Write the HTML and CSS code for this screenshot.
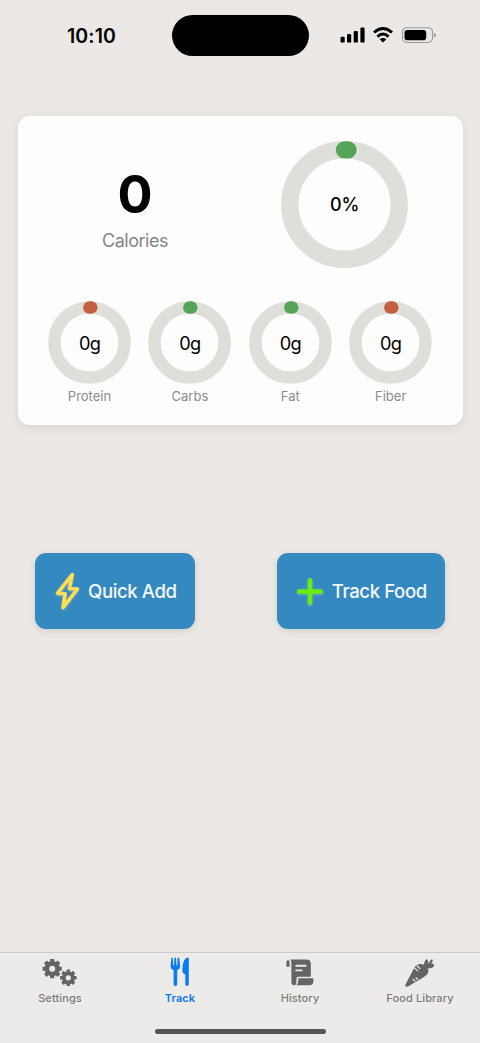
FILE: index.html
```html
<!DOCTYPE html>
<html lang="en">
<head>
<meta charset="utf-8">
<title>Track</title>
<link rel="stylesheet" href="styles.css">
</head>
<body>
<div class="screen">
  <header class="status">
    <span class="time">10:10</span>
    <span class="island"></span>
    <svg class="signals" width="98" height="20" viewBox="339 25 98 20">
      <rect x="340.5" y="36.7" width="4.2" height="5.9" rx="1.2"/>
      <rect x="347" y="34" width="4.2" height="8.6" rx="1.2"/>
      <rect x="353.7" y="31" width="4.2" height="11.6" rx="1.2"/>
      <rect x="360.4" y="27.5" width="4.2" height="15.1" rx="1.2"/>
      <path class="arc" d="M374 32.5Q383 24.4 392 32.5M377.4 36.6Q383 31.5 388.6 36.6"/>
      <path d="M379.6 39.3Q383 36.6 386.4 39.3L383 42.6Z"/>
      <rect class="shell" x="402.5" y="27.7" width="30" height="14.8" rx="4.4"/>
      <rect x="404.5" y="30" width="21.7" height="10.2" rx="2.8"/>
      <path class="tip" d="M434 32.8Q436 33.4 436 35.1T434 37.4Z"/>
    </svg>
  </header>

  <main class="content">
    <section class="card">
      <div class="summary">
        <div class="calories">
          <strong>0</strong>
          <span>Calories</span>
        </div>
        <div class="ring ring-large">
          <svg viewBox="0 0 127 127">
            <circle class="track" cx="63.5" cy="63.5" r="54.7"/>
            <path class="halo" d="M64 8.9H68.2"/>
            <path class="green" d="M63.5 8.9H67.1"/>
          </svg>
          <span>0%</span>
        </div>
      </div>
      <div class="macros">
        <div class="macro">
          <div class="ring"><svg viewBox="0 0 83 83"><circle class="track" cx="41.5" cy="41.5" r="35.1"/><path class="halo" d="M41.5 6.6H44"/><path class="red" d="M41.3 6.6H43.4"/></svg><span>0g</span></div>
          <p>Protein</p>
        </div>
        <div class="macro">
          <div class="ring"><svg viewBox="0 0 83 83"><circle class="track" cx="41.5" cy="41.5" r="35.1"/><path class="halo" d="M41.5 6.6H44"/><path class="green" d="M41.3 6.6H43.4"/></svg><span>0g</span></div>
          <p>Carbs</p>
        </div>
        <div class="macro">
          <div class="ring"><svg viewBox="0 0 83 83"><circle class="track" cx="41.5" cy="41.5" r="35.1"/><path class="halo" d="M41.5 6.6H44"/><path class="green" d="M41.3 6.6H43.4"/></svg><span>0g</span></div>
          <p>Fat</p>
        </div>
        <div class="macro">
          <div class="ring"><svg viewBox="0 0 83 83"><circle class="track" cx="41.5" cy="41.5" r="35.1"/><path class="halo" d="M41.5 6.6H44"/><path class="red" d="M41.3 6.6H43.4"/></svg><span>0g</span></div>
          <p>Fiber</p>
        </div>
      </div>
    </section>

    <div class="actions">
      <button class="action quick">
        <svg class="bolt" width="26" height="38" viewBox="0 0 26 38"><path d="M17.2 2.5L2.6 21.2L10.1 21.7L8.1 35.5L22.4 17L14.4 16.5Z"/></svg>
        <span>Quick Add</span>
      </button>
      <button class="action food">
        <svg class="plus" width="26" height="27" viewBox="0 0 26 27"><path d="M13 2.2V24.8M2 13.5H24"/></svg>
        <span>Track Food</span>
      </button>
    </div>
  </main>

  <nav class="tabs">
    <a class="tab">
      <svg width="36" height="30" viewBox="0 0 36 30">
        <g class="gear" transform="translate(10.2 11.7)">
          <circle r="5.3"/>
          <path d="M0-6V-9.6M0 6V9.6M-6 0H-9.6M6 0H9.6M-4.2-4.2L-6.8-6.8M4.2-4.2L6.8-6.8M-4.2 4.2L-6.8 6.8M4.2 4.2L6.8 6.8"/>
        </g>
        <g class="gear" transform="translate(26.3 20.8) scale(.86)">
          <circle r="5.3"/>
          <path d="M0-6V-9.6M0 6V9.6M-6 0H-9.6M6 0H9.6M-4.2-4.2L-6.8-6.8M4.2-4.2L6.8-6.8M-4.2 4.2L-6.8 6.8M4.2 4.2L6.8 6.8"/>
        </g>
      </svg>
      <span>Settings</span>
    </a>
    <a class="tab active">
      <svg width="36" height="30" viewBox="-.4 .2 36 30">
        <path d="M9.1 1.2Q9.9.4 10.5 1.2L10.8 8.6H11.6L12.1 1.1Q12.9.3 13.7 1.1L14.1 8.6H14.9L15.3 1.2Q16.2.4 16.8 1.2L17.7 9Q17.8 12.4 14.8 13.3V27.7Q14.6 29.2 13 29.2T11.2 27.7V13.3Q8.1 12.4 8.2 9Z"/>
        <path d="M25.2.8Q26.3.7 26.4 2V27.8Q26.2 29.2 24.6 29.2T22.9 27.8V17.8L20.6 16.3Q19.6 14.6 20.2 10Q21 1.8 25.2.8Z"/>
      </svg>
      <span>Track</span>
    </a>
    <a class="tab">
      <svg width="36" height="30" viewBox="0 .2 36 30">
        <path d="M4.4 10V6Q4.4 3.2 6 3.2T7.6 6V10Z"/>
        <path d="M8 2.7H24.5Q28.8 2.8 28.8 7V19.9H16.4Q14.4 19.9 14.4 22V25.4Q14.3 28.5 11.9 28.5T9.4 25.5V6Q9.4 4 8 2.7Z"/>
        <path d="M16.2 21.5H31.4V24.2Q31.4 28.5 27.3 28.5H14.2Q16 27.2 16.2 24.8Z"/>
        <path class="cut" d="M14.2 9H23.7M14.2 13.6H19.8"/>
      </svg>
      <span>History</span>
    </a>
    <a class="tab">
      <svg width="36" height="30" viewBox="0 .2 36 30">
        <path d="M3.8 29.6Q2.9 29 3.6 27.4L12.2 11.1Q14.5 7.3 18.5 7.2Q22.7 7.3 24.8 10.2Q28.2 14.4 24.7 18Q23 19.5 21.2 20.7L6.4 29.5Q5 30.2 3.8 29.6Z"/>
        <path d="M22.3 10.2Q21.2 5.4 24.6 2.2Q27.4 4.6 26.5 7.1Q28 3.4 30 2.3Q31.8 4.2 29 7.1Q31.7 6.3 32.2 8.3Q31.6 12.5 24 11.4Z"/>
        <path class="slash" d="M12.6 11.3L15.7 14.1M15 9L17.8 11.7M11 22.5L13 24.3M13.9 21L15.6 22.5"/>
      </svg>
      <span>Food Library</span>
    </a>
  </nav>
  <footer class="home"><span></span></footer>
</div>
</body>
</html>
```
FILE: styles.css
```css
* { box-sizing: border-box; }
body {
  margin: 0;
  background: #ebe8e5;
  font-family: Inter, Roboto, sans-serif;
  color: #000;
}
.screen {
  width: 480px;
  height: 1043px;
  display: flex;
  flex-direction: column;
  overflow: hidden;
}
.status {
  height: 70px;
  flex: none;
  display: grid;
  grid-template-columns: 171.5px 137px 171.5px;
}
.time {
  padding: 24px 0 0 67px;
  font-size: 19.5px;
  line-height: 25px;
  font-weight: 600;
  letter-spacing: 0.1px;
}
.island {
  margin-top: 15px;
  height: 40.5px;
  border-radius: 21px;
  background: #000;
}
.signals { margin: 25px 0 0 30.5px; }
.arc { fill: none; stroke: #000; stroke-width: 2.9; }
.shell { fill: none; stroke: #999; stroke-width: 1.1; }
.tip { fill: #999; }
.content { flex: 1; padding: 45.6px 17.5px 0; }
.card {
  height: 309.8px;
  padding-top: 25.5px;
  background: #fdfdfd;
  border-radius: 12px;
  box-shadow: 0 3px 10px rgba(60, 65, 50, 0.11);
}
.summary {
  display: grid;
  grid-template-columns: 235px 1fr;
}
.calories {
  display: flex;
  flex-direction: column;
  align-items: center;
  padding-top: 21px;
}
.calories strong {
  font-size: 52px;
  line-height: 66px;
  font-weight: 700;
}
.calories span {
  margin-top: 1px;
  font-size: 18px;
  line-height: 24px;
  color: #858585;
  letter-spacing: -0.5px;
}
.ring {
  display: grid;
  width: 83px;
  height: 83px;
  place-items: center;
}
.ring > * { grid-area: 1 / 1; }
.ring svg { width: 100%; height: 100%; }
.ring span { font-size: 18.2px; letter-spacing: -0.7px; line-height: 24px; padding-top: 1px; }
.ring circle, .ring path { fill: none; stroke-width: 12.5; }
.ring path { stroke-linecap: round; }
.ring .track { stroke: #dedfd9; }
.ring .halo { stroke: #f1f4ef; }
.ring .green { stroke: #55a457; }
.ring .red { stroke: #c55f42; }
.ring-large {
  width: 127px;
  height: 127px;
  margin-left: 28.7px;
}
.ring-large circle, .ring-large path { stroke-width: 17.4; }
.ring-large span { font-size: 18px; font-weight: 550; letter-spacing: 0; padding-top: 1px; }
.macros {
  display: grid;
  grid-template-columns: repeat(4, 83px);
  column-gap: 17.4px;
  margin: 32.7px 0 0 30.5px;
}
.macro p {
  margin: 3px 0 0;
  text-align: center;
  font-size: 13px;
  line-height: 18px;
  color: #8b8b8b;
  letter-spacing: 0;
}
.actions {
  display: flex;
  justify-content: space-between;
  margin: 127.5px 0 0;
  padding: 0 17.5px;
}
.action {
  height: 76.3px;
  display: flex;
  align-items: center;
  border: 0;
  border-radius: 11px;
  background: #3589c1;
  color: #f5f8fa;
  font: 500 18.6px/24px Inter, Roboto, sans-serif;
  white-space: nowrap;
  padding: 0;
  box-shadow: 0 2px 7px rgba(50, 60, 60, 0.14);
}
.quick { width: 160px; padding-left: 20px; }
.food { width: 168.5px; padding-left: 20.5px; }
.quick span { margin-left: 7px; letter-spacing: -0.4px; }
.food span { margin-left: 8.8px; letter-spacing: -0.4px; }
.action path {
  fill: none;
  stroke-linecap: round;
  stroke-linejoin: round;
}
.bolt { filter: drop-shadow(0 1px 1px rgba(180, 190, 180, 0.6)); }
.bolt path { stroke: #ffdf51; stroke-width: 3.6; }
.plus { filter: drop-shadow(0 1px 1px rgba(160, 190, 180, 0.65)); }
.plus path { stroke: #65ee0e; stroke-width: 4.5; }
.tabs {
  flex: none;
  height: 70px;
  display: grid;
  grid-template-columns: repeat(4, 120px);
  border-top: 1px solid #cacaca;
  background: #ecebe9;
}
.tab {
  display: flex;
  flex-direction: column;
  align-items: center;
  padding-top: 4px;
  color: #646464;
  fill: currentColor;
}
.tab span {
  margin-top: 4px;
  font-size: 11px;
  line-height: 15px;
  font-weight: 500;
  letter-spacing: 0.1px;
  color: #7c7c7c;
}
.active, .active span { color: #087bf1; }
.active span { font-weight: 600; }
.gear { fill: none; stroke: #646464; }
.gear circle { stroke-width: 4.6; }
.gear path { stroke-width: 4.1; }
.cut, .slash { fill: none; stroke: #ecebe9; stroke-linecap: round; }
.cut { stroke-width: 1.9; }
.slash { stroke-width: 1.2; }
.home {
  flex: none;
  height: 21px;
  background: #ecebe9;
  padding-top: 6.5px;
}
.home span {
  display: block;
  width: 171px;
  height: 5.5px;
  margin: 0 auto;
  border-radius: 3px;
  background: #555;
}
```
